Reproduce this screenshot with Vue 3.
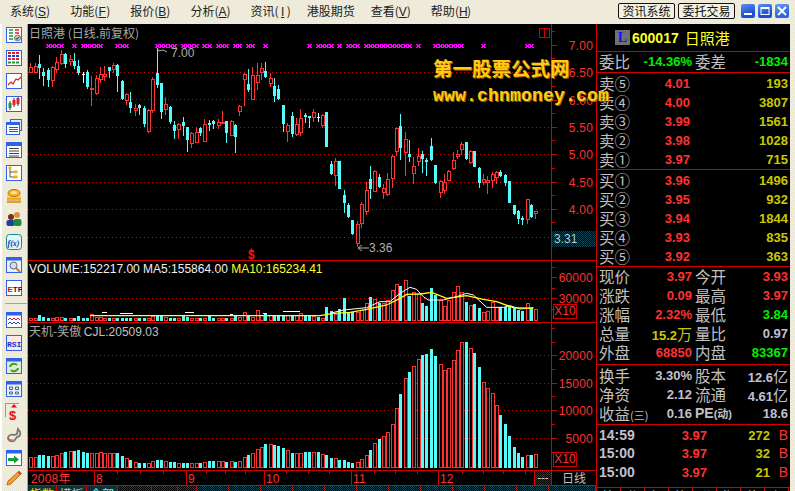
<script setup>
// y values are in 3x page units, second block starts at y = 30
const firstCandles = [
  ['r',202,215,190,220],['r',198,215,190,220],['c',193,203,165,237],['c',216,227,205,257],['c',210,240,205,260],
  ['r',200,240,197,260],['r',185,208,172,220],['r',162,190,150,195],['c',162,193,158,205],['r',178,183,165,198],
  ['c',183,197,160,207],['c',198,218,180,225],['w',222,222,215,250],['c',215,260,210,268],['r',265,265,228,317],
  ['r',235,280,225,285],['r',222,237,200,250],['r',222,228,198,242],['c',202,212,200,235],['r',195,207,188,220],
  ['c',195,227,192,275],['c',243,298,240,300],['r',282,300,278,316],['c',305,323,275,340],['r',325,330,312,347],
  ['c',315,323,312,345],['c',323,372,318,380],['r',330,393,328,398],['r',237,330,232,338],['c',220,255,143,265],
  ['c',250,335,248,357],['r',312,328,292,345],['c',322,367,318,372],['c',375,392,362,417],['r',373,387,370,417],
  ['c',365,378,350,407],['c',381,420,380,455],['r',400,430,395,445],['r',397,425,380,427],['c',384,398,380,408],
  ['r',373,423,358,427],['c',368,375,360,392],['c',363,372,360,387],['r',366,374,358,388],['r',365,369,333,369],
  ['c',363,398,362,428],['r',363,404,360,405],['c',375,410,373,458],['r',318,332,315,348],['r',223,236,220,318],
  ['c',252,270,208,275],['r',226,298,200,300],['r',225,245,190,270],['r',205,215,190,240],['c',213,232,187,235],
  ['r',235,250,220,262],['c',258,288,235,305],['c',267,298,255,300],['c',316,372,315,395],['r',375,392,368,425],
  ['c',348,402,337,412],['r',372,402,355,408],
]
const secondCandles = [
  ['r',265,305,238,317],['c',255,262,250,280],['c',259,264,258,293],['r',246,262,238,275],['w',262,262,248,275],
  ['r',255,285,252,293],['c',246,350,245,350],['c',403,432,393,435],['r',393,434,385,467],['c',393,476,393,477],
  ['c',495,518,480,548],['c',524,561,520,563],['c',570,612,570,614],['r',582,638,572,650],['r',523,580,515,593],
  ['r',480,542,455,555],['c',447,477,408,507],['r',423,482,420,485],['c',440,470,432,474],['r',475,485,462,507],
  ['r',447,492,430,497],['r',378,445,375,473],['r',295,362,292,377],['c',288,353,252,390],['r',327,365,307,437],
  ['c',372,381,330,396],['r',408,430,380,462],['r',378,393,353,407],['c',372,388,362,430],['c',390,395,383,438],
  ['c',348,390,323,392],['c',405,458,405,462],['r',453,485,450,503],['r',457,480,432,492],['r',423,450,420,453],
  ['r',390,413,367,420],['r',373,377,360,388],['r',342,358,337,375],['c',336,388,336,390],['r',362,397,360,402],
  ['c',363,410,363,412],['c',413,458,410,474],['r',447,455,433,464],['r',450,457,437,492],['r',432,449,425,473],
  ['r',427,442,422,462],['c',426,438,420,440],['c',435,458,432,468],['c',453,518,453,520],['c',525,552,525,555],
  ['c',543,567,540,582],['c',563,570,558,585],['r',508,568,507,582],['c',525,560,522,563],['r',544,550,544,567],
]

function barX(i) {
  return Math.round(30.33 + 4.353 * i)
}

const candles = [...firstCandles, ...secondCandles.map(c => [c[0], c[1] + 90, c[2] + 90, c[3] + 90, c[4] + 90])].map((c, i) => ({
  kind: c[0],
  x: barX(i),
  top: Math.round(c[1] / 3),
  bottom: Math.round(c[2] / 3),
  high: Math.round(c[3] / 3),
  low: Math.round(c[4] / 3),
}))

const markerIndexes = [4,5,6,7,10,12,13,14,15,16,20,21,22,29,30,31,32,33,35,36,37,38,40,41,43,44,45,47,48,50,51,54,
  64,66,67,68,69,71,73,74,75,77,78,79,80,81,82,83,84,85,86,87,89,93,94,95,96,97,98,99,104,114,115]

// bar heights in 3x units, negative = hollow red
const volumeRaw = [-5,-5,15,8,6,-5,-10,-10,6,-5,6,12,6,6,-18,-8,-10,-6,6,-6,6,5,5,5,-5,5,4,-3,-12,15,12,-8,6,6,-5,15,8,-7,-5,5,-5,12,5,-5,-5,5,-7,15,-10,-25,15,-10,-30,-15,20,-15,12,15,15,-15,15,-15,
  -20,13,13,-13,8,-6,40,27,-18,33,66,25,25,-25,-30,-50,68,-62,50,-50,-60,-90,-108,102,-120,72,-85,-80,50,42,96,75,-60,-42,-60,-84,-102,-84,54,-45,48,36,-24,-27,-55,-38,38,40,42,36,30,27,-50,37,-34]
const cjlRaw = [-30,-30,37,37,34,-34,-37,-43,46,-49,49,52,46,43,-43,-43,-46,-43,-43,-43,43,34,-27,21,-15,12,12,-12,-18,21,21,-18,15,15,-12,12,12,-12,-12,12,-15,18,18,-18,-18,15,-18,15,-18,-30,37,-43,-55,-61,70,-70,67,64,58,-52,43,-43,
  -42,44,44,-44,44,-40,36,28,-28,21,21,15,12,-15,-24,-36,52,-72,84,-93,-105,-129,-177,219,-267,285,-303,-324,336,339,354,333,-309,-291,-297,-321,-351,-375,375,-357,342,300,-255,-237,-222,-186,156,129,93,60,42,30,-36,36,-39]

function makeBars(list, base) {
  return list.map((v, i) => {
    const h = Math.max(2, Math.round(Math.abs(v) / 3))
    return { x: barX(i), y: base - h, h, hollow: v < 0 }
  })
}
const volumeBars = makeBars(volumeRaw, 320)
const cjlBars = makeBars(cjlRaw, 467)

function line(points) {
  return points.map(p => `${300 + p[0] / 3},${260 + p[1] / 3}`).join(' ')
}
const ma10 = line([[-630,167],[0,167],[60,167],[100,160],[150,157],[200,148],[260,135],[300,115],[320,103],[360,102],[395,97],[440,115],[500,107],[550,118],[590,125],[640,143],[700,145]])
const ma5 = line([[90,160],[130,150],[200,143],[240,125],[270,125],[300,100],[330,82],[350,88],[370,110],[385,120],[430,120],[470,110],[500,100],[520,105],[560,142],[610,142],[630,137],[660,147],[700,143]])
const ma5Left = ['-595,158 -580,158','-540,160 -500,160','-345,158 -318,158','-210,163 -200,163','-110,161 -100,161','-50,153 0,153'].map(s =>
  s.split(' ').map(p => p.split(',').map(Number)))
const ma5Pieces = ma5Left.map(line)

const mainGrid = [72, 99, 127, 154, 182, 209, 237]
const priceLabels = [['7.00',45],['6.50',72],['6.00',100],['5.50',127],['5.00',154],['4.50',182],['4.00',209]]
const priceMinor = [31,58,86,113,140,168,195,222]
const volumeLabels = [['60000',277],['30000',298]]
const volumeMinor = [267,288,309]
const cjlLabels = [['20000',355],['15000',383],['10000',410],['5000',438]]
const cjlMinor = [328,342,369,396,424,452]

const months = [['2008年',31,0],['8',96,94],['9',188,186],['10',266,264],['11',353,351],['12',440,438]]
const timeTicks = [117,140,163,206,225,245,286,308,329,374,395,417,462,483,503,525]

const sells = [['卖⑤','4.01','193'],['卖④','4.00','3807'],['卖③','3.99','1561'],['卖②','3.98','1028'],['卖①','3.97','715']]
const buys = [['买①','3.96','1496'],['买②','3.95','932'],['买③','3.94','1844'],['买④','3.93','835'],['买⑤','3.92','363']]
const ticks = [['14:59','3.97','272'],['15:00','3.97','32'],['15:00','3.97','21']]
const menus = [['系统','S'],['功能','F'],['报价','B'],['分析','A'],['资讯','I'],['港股期货',''],['查看','V'],['帮助','H']]

const chartTabs = [[29,'指数','yellow'],[30,'模板','grey'],[31,'全部','cyan'],[34],[26],[19],[32],[32],[32],[32],[32],[32],[32],[32],[32],[32],[32],[47]]
const sideTabs = ['笔','分','细','势','联','指','值','主']
</script>

<template>
  <div class="app">
    <header class="menubar">
      <nav class="menus">
        <span v-for="m in menus" :key="m[0]" class="menu" :class="{ wide: !m[1] }">{{ m[0] }}<template v-if="m[1]">(<u>{{ m[1] }}</u>)</template></span>
      </nav>
      <div class="actions">
        <button class="cmd">资讯系统</button>
        <button class="cmd last">委托交易</button>
        <span class="win">
          <svg width="14" height="14" viewBox="0 0 14 14"><rect x="3" y="9" width="8" height="2" fill="#fff" /></svg>
        </span>
        <span class="win">
          <svg width="14" height="14" viewBox="0 0 14 14"><rect x="3" y="3.5" width="8" height="7" fill="none" stroke="#fff" /><rect x="3" y="3" width="8" height="2" fill="#fff" /></svg>
        </span>
        <span class="win close">
          <svg width="14" height="14" viewBox="0 0 14 14"><path d="M3 3l8 8M11 3l-8 8" stroke="#fff" stroke-width="2" /></svg>
        </span>
      </div>
    </header>

    <div class="workspace">
      <aside class="toolbar">
        <svg class="tool" viewBox="0 0 16 16"><rect x=".5" y=".5" width="15" height="15" fill="#fff" stroke="#2f62e8" /><path d="M3 3h4M3 6h4M3 9h4M3 12h4" stroke="#1a9a30" stroke-width="1.4" /><path d="M9 3h4M9 6h4" stroke="#e02020" stroke-width="1.4" /><circle cx="11.5" cy="11" r="3" fill="#ccc" stroke="#777" /><path d="M10 11l1 1.5 2-3" stroke="#333" fill="none" /></svg>
        <svg class="tool" viewBox="0 0 16 16"><rect x=".5" y=".5" width="15" height="15" fill="#fff" stroke="#2f62e8" /><path d="M2 3h12" stroke="#e02020" stroke-width="2" stroke-dasharray="3 1" /><path d="M2 6h12" stroke="#1a3ad0" stroke-width="2" stroke-dasharray="3 1" /><path d="M2 9h12" stroke="#e02020" stroke-width="2" stroke-dasharray="3 1" /><path d="M2 12.5h12" stroke="#1a9a30" stroke-width="2" stroke-dasharray="3 1" /></svg>
        <svg class="tool" viewBox="0 0 16 16"><rect x=".5" y=".5" width="15" height="15" fill="#fff" stroke="#2f62e8" /><path d="M2 12l3-3 2 2 3-5 2 1 3-3" fill="none" stroke="#e02020" stroke-width="1.2" /></svg>
        <svg class="tool" viewBox="0 0 16 16"><rect x=".5" y=".5" width="15" height="15" fill="#fff" stroke="#2f62e8" /><path d="M4 5v9M8 2v9M12 1v9" stroke="#333" /><rect x="2.5" y="7" width="3" height="5" fill="#1a9a30" /><rect x="6.5" y="4" width="3" height="5" fill="#e02020" /><rect x="10.5" y="2" width="3" height="6" fill="#e02020" /></svg>
        <svg class="tool" viewBox="0 0 16 16"><rect x="4.5" y=".5" width="11" height="11" fill="#dfe8fb" stroke="#2f62e8" /><rect x=".5" y="3.5" width="13" height="12" fill="#fff" stroke="#2f62e8" /><rect x="1" y="4" width="12" height="2" fill="#2f62e8" /><path d="M3 8.5h9M3 10.5h9M3 12.5h9" stroke="#555" /></svg>
        <svg class="tool" viewBox="0 0 16 16"><rect x=".5" y=".5" width="15" height="15" fill="#fff" stroke="#2f62e8" /><rect x="1" y="1" width="14" height="3" fill="#2f62e8" /><path d="M3 6.5h10M3 9h10M3 11.5h10M3 14h10" stroke="#444" /></svg>
        <svg class="tool" viewBox="0 0 16 16"><rect x=".5" y=".5" width="15" height="15" fill="#fff" stroke="#2f62e8" /><path d="M4 3v9h4M4 7h4" fill="none" stroke="#555" /><rect x="2.5" y="1.5" width="3" height="3" fill="#f0b020" /><rect x="7.5" y="5.5" width="4" height="3" fill="#f0b020" /><rect x="7.5" y="10.5" width="4" height="3" fill="#f0b020" /></svg>
        <svg class="tool" viewBox="0 0 16 16"><rect x="1" y="10" width="14" height="5" fill="#e8a020" /><rect x="1" y="7" width="14" height="3" fill="#f8d040" /><ellipse cx="8" cy="5" rx="6" ry="3.5" fill="#f4b830" stroke="#c07010" /><ellipse cx="8" cy="4.5" rx="3" ry="1.5" fill="#fbe880" /><path d="M1 12h14" stroke="#b4d0f0" /></svg>
        <svg class="tool" viewBox="0 0 16 16"><circle cx="5" cy="6" r="3" fill="#7a3010" /><rect x="0.5" y="9" width="8" height="6" rx="2" fill="#1f3f9a" /><circle cx="11" cy="4" r="3" fill="#d89040" /><rect x="7.5" y="8" width="8" height="7" rx="2" fill="#1f8a3a" /></svg>
        <svg class="tool" viewBox="0 0 16 16"><rect x=".5" y=".5" width="15" height="15" rx="3" fill="#e4f6f4" stroke="#108a8a" /><text x="1.5" y="12" class="fx">f(x)</text></svg>
        <svg class="tool" viewBox="0 0 16 16"><rect x=".5" y=".5" width="15" height="15" fill="#eaf0fc" stroke="#2f62e8" /><rect x="1" y="1" width="14" height="2.5" fill="#2f62e8" /><circle cx="7.5" cy="8.5" r="3.5" fill="#cfe0f4" stroke="#667" /><path d="M10 11l4 4" stroke="#c08030" stroke-width="2" /></svg>
        <svg class="tool" viewBox="0 0 16 16"><rect x=".5" y=".5" width="15" height="15" fill="#fff" stroke="#2f62e8" /><text x="1.5" y="11.5" class="etf"><tspan fill="#d01010">E</tspan><tspan fill="#222">TF</tspan></text></svg>
        <div class="toolsep"></div>
        <svg class="tool" viewBox="0 0 16 16"><rect x=".5" y=".5" width="15" height="15" fill="#fff" stroke="#2f62e8" /><rect x="1" y="1" width="14" height="2.5" fill="#2f62e8" /><path d="M2 8l2-2 2 2 2-2 2 2 2-2 2 2" fill="none" stroke="#e02020" /><path d="M2 12l2-2 2 2 2-2 2 2 2-2 2 2" fill="none" stroke="#1a3ad0" /></svg>
        <svg class="tool" viewBox="0 0 16 16"><rect x=".5" y=".5" width="15" height="15" fill="#fbe9e4" stroke="#2f62e8" /><text x="1" y="11.5" class="rsi">RSI</text></svg>
        <svg class="tool" viewBox="0 0 16 16"><rect x=".5" y=".5" width="15" height="15" fill="#e4ecd8" stroke="#2f62e8" /><rect x="1" y="1" width="14" height="2.5" fill="#2f62e8" /><path d="M4 9a4 3.5 0 0 1 7-2M12 10a4 3.5 0 0 1-7 2" fill="none" stroke="#3aa030" stroke-width="2" /></svg>
        <svg class="tool" viewBox="0 0 16 16"><rect x=".5" y=".5" width="15" height="15" fill="#e8f0fc" stroke="#2f62e8" /><rect x="1" y="1" width="14" height="2.5" fill="#2f62e8" /><path d="M3.5 6h3v2.500h-3zM9.500 6h3v2.500h-3zM3.500 11h3v2h-3zM9.500 11h3v2h-3z" fill="none" stroke="#506080" /></svg>
        <div class="tool pressed">
          <svg width="16" height="16" viewBox="0 0 16 16"><path d="M8 0l3 3.500H5z" fill="#e01010" /><text x="3" y="15.500" class="dollar">$</text></svg>
        </div>
        <svg class="tool" viewBox="0 0 16 16"><path d="M2 11c0-3 4-4 6-3l3-1 1-5 2 3c1 3-1 5-3 5l-3 4c-3 1-6 0-6-3z" fill="none" stroke="#777" stroke-width="1.800" /><path d="M2 11c1 2 3 2 5 2" stroke="#d04020" fill="none" /></svg>
        <svg class="tool" viewBox="0 0 16 16"><rect x=".5" y=".5" width="15" height="15" fill="#fff" stroke="#2f62e8" /><rect x="1" y="1" width="14" height="2.500" fill="#2f62e8" /><path d="M2 8h6V5.500l5 4-5 4V11H2z" fill="#10a030" /></svg>
        <svg class="tool pencil" viewBox="0 0 16 16"><path d="M13 1l2.500 2.500L5 14 1 15l1-4z" fill="#f0a030" stroke="#a05010" stroke-width=".7" /><path d="M13 1l2.500 2.500-1.500 1.500L11.500 2.500z" fill="#e04040" /></svg>
      </aside>

      <main class="charts">
        <section class="pane main-pane">
          <div class="plot">
            <svg width="523" height="236" viewBox="28 24 523 236" shape-rendering="crispEdges">
              <line v-for="y in mainGrid" :key="y" x1="28" x2="551" :y1="y + 0.5" :y2="y + 0.5" class="dots" />
              <path v-for="i in markerIndexes" :key="i" :d="`M${barX(i) - 1.5} 44l4 4m0-4l-4 4`" class="marker" />
              <g v-for="(c, i) in candles" :key="i" :class="c.kind">
                <line class="wick" :x1="c.x + 0.5" :x2="c.x + 0.5" :y1="c.high" :y2="c.top" />
                <line class="wick" :x1="c.x + 0.5" :x2="c.x + 0.5" :y1="c.bottom" :y2="c.low" />
                <rect v-if="c.kind === 'c'" :x="c.x - 1" :y="c.top" width="3" :height="c.bottom - c.top" class="solid" />
                <template v-else-if="c.kind === 'r'">
                  <rect :x="c.x - 1" :y="c.top" width="4" :height="Math.max(2, c.bottom - c.top + 1)" class="red-bar" />
                  <rect :x="c.x" :y="c.top + 1" width="2" :height="Math.max(0, c.bottom - c.top - 1)" class="inner" />
                </template>
                <line v-else class="wick" :x1="c.x - 1" :x2="c.x + 2" :y1="c.top + 0.5" :y2="c.top + 0.5" />
              </g>
              <path d="M157 48l2 3 4-1 4 2" class="note-line" shape-rendering="auto" />
              <text x="171" y="57" class="note">7.00</text>
              <path d="M358 248h11M358 248l4-3M358 248l4 3" class="note-line" shape-rendering="auto" />
              <text x="369" y="252" class="note">3.36</text>
              <path d="M249 252l2.500-4 2.500 4z" fill="#ff1010" shape-rendering="auto" />
              <text x="248" y="259" class="flag">$</text>
              <rect x="539.500" y="28.500" width="10" height="9" class="outline" />
              <line x1="544.500" x2="544.500" y1="28" y2="38" class="outline" />
            </svg>
            <div class="title stock-title">日照港 (日线.前复权)</div>
          </div>
          <svg class="axis" width="44" height="236" viewBox="552 24 44 236" shape-rendering="crispEdges">
            <g v-for="l in priceLabels" :key="l[0]">
              <line x1="552" x2="557" :y1="l[1] + 0.5" :y2="l[1] + 0.5" class="tick" />
              <text x="593" :y="l[1] + 5" text-anchor="end" class="axis-text">{{ l[0] }}</text>
            </g>
            <line v-for="y in priceMinor" :key="y" x1="552" x2="555" :y1="y + 0.5" :y2="y + 0.5" class="tick" />
          </svg>
          <div class="last-price">3.31</div>
        </section>

        <section class="pane volume-pane">
          <div class="plot">
            <svg width="523" height="61" viewBox="28 261 523 61" shape-rendering="crispEdges">
              <line x1="28" x2="551" y1="298.500" y2="298.500" class="dots" />
              <template v-for="(b, i) in volumeBars" :key="i">
                <template v-if="b.hollow">
                  <rect :x="b.x - 1" :y="b.y" width="4" :height="b.h + 1" class="red-bar" />
                  <rect :x="b.x" :y="b.y + 1" width="2" :height="b.h - 1" class="inner" />
                </template>
                <rect v-else :x="b.x - 1" :y="b.y" width="3" :height="b.h + 1" class="solid" />
              </template>
              <polyline v-for="p in ma5Pieces" :key="p" :points="p" class="ma-white" />
              <polyline :points="ma5" class="ma-white" shape-rendering="auto" />
              <polyline :points="ma10" class="ma-yellow" shape-rendering="auto" />
            </svg>
            <div class="title vol-title">VOLUME:152217.00 MA5:155864.00 <span class="ma10">MA10:165234.41</span></div>
          </div>
          <svg class="axis" width="44" height="61" viewBox="552 261 44 61" shape-rendering="crispEdges">
            <g v-for="l in volumeLabels" :key="l[0]">
              <line x1="552" x2="557" :y1="l[1] + 0.5" :y2="l[1] + 0.5" class="tick" />
              <text x="593" :y="l[1] + 5" text-anchor="end" class="axis-text">{{ l[0] }}</text>
            </g>
            <line v-for="y in volumeMinor" :key="y" x1="552" x2="555" :y1="y + 0.5" :y2="y + 0.5" class="tick" />
          </svg>
          <div class="zoom-box">X10</div>
        </section>

        <section class="pane cjl-pane">
          <div class="plot">
            <svg width="523" height="147" viewBox="28 323 523 147" shape-rendering="crispEdges">
              <line v-for="l in cjlLabels" :key="l[0]" x1="28" x2="551" :y1="l[1] + 0.5" :y2="l[1] + 0.5" class="dots" />
              <template v-for="(b, i) in cjlBars" :key="i">
                <template v-if="b.hollow">
                  <rect :x="b.x - 1" :y="b.y" width="4" :height="b.h + 1" class="red-bar" />
                  <rect :x="b.x" :y="b.y + 1" width="2" :height="b.h - 1" class="inner" />
                </template>
                <rect v-else :x="b.x - 1" :y="b.y" width="3" :height="b.h + 1" class="solid" />
              </template>
            </svg>
            <div class="title cjl-title">天机-笑傲 <span class="latin">CJL:20509.03</span></div>
          </div>
          <svg class="axis" width="44" height="147" viewBox="552 323 44 147" shape-rendering="crispEdges">
            <g v-for="l in cjlLabels" :key="l[0]">
              <line x1="552" x2="557" :y1="l[1] + 0.5" :y2="l[1] + 0.5" class="tick" />
              <text x="593" :y="l[1] + 5" text-anchor="end" class="axis-text">{{ l[0] }}</text>
            </g>
            <line v-for="y in cjlMinor" :key="y" x1="552" x2="555" :y1="y + 0.5" :y2="y + 0.5" class="tick" />
          </svg>
          <div class="zoom-box">X10</div>
        </section>

        <section class="timebar">
          <svg width="506" height="14" viewBox="28 471 506 14" shape-rendering="crispEdges">
            <line v-for="t in timeTicks" :key="t" :x1="t + 0.5" :x2="t + 0.5" y1="471" y2="474" class="tick" />
            <g v-for="m in months" :key="m[0]">
              <line v-if="m[2]" :x1="m[2] + 0.5" :x2="m[2] + 0.5" y1="471" y2="485" class="tick" />
              <text :x="m[1]" y="483" class="axis-text">{{ m[0] }}</text>
            </g>
          </svg>
          <div class="dash-cell">---</div>
          <div class="period">日线</div>
        </section>

        <footer class="chart-tabs">
          <span v-for="(t, i) in chartTabs" :key="i" class="tab" :class="t[2] || 'dither'" :style="{ width: t[0] + 'px' }">{{ t[1] }}</span>
        </footer>
      </main>

      <aside class="panel">
        <div class="stock-head">
          <span class="logo">L</span>
          <span class="code">600017</span>
          <span class="name">日照港</span>
        </div>
        <div class="row-grid ratio">
          <span class="cn">委比</span><b class="green">-14.36%</b><span class="cn pad">委差</span><b class="green">-1834</b>
        </div>
        <div class="book">
          <div v-for="r in sells" :key="r[0]" class="book-row">
            <span class="cn">{{ r[0] }}</span><b class="red">{{ r[1] }}</b><b class="olive">{{ r[2] }}</b>
          </div>
        </div>
        <div class="book">
          <div v-for="r in buys" :key="r[0]" class="book-row">
            <span class="cn">{{ r[0] }}</span><b class="red">{{ r[1] }}</b><b class="olive">{{ r[2] }}</b>
          </div>
        </div>
        <div class="stats quote">
          <div class="row-grid"><span class="cn">现价</span><b class="red">3.97</b><span class="cn pad">今开</span><b class="red">3.93</b></div>
          <div class="row-grid"><span class="cn">涨跌</span><b class="red">0.09</b><span class="cn pad">最高</span><b class="red">3.97</b></div>
          <div class="row-grid"><span class="cn">涨幅</span><b class="red">2.32%</b><span class="cn pad">最低</span><b class="green">3.84</b></div>
          <div class="row-grid"><span class="cn">总量</span><b class="olive">15.2<i>万</i></b><span class="cn pad">量比</span><b class="pale">0.97</b></div>
          <div class="row-grid"><span class="cn">外盘</span><b class="red">68850</b><span class="cn pad">内盘</span><b class="green">83367</b></div>
        </div>
        <div class="stats finance">
          <div class="row-grid"><span class="cn">换手</span><b class="pale">3.30%</b><span class="cn pad">股本</span><b class="pale">12.6<i>亿</i></b></div>
          <div class="row-grid"><span class="cn">净资</span><b class="pale">2.12</b><span class="cn pad">流通</span><b class="pale">4.61<i>亿</i></b></div>
          <div class="row-grid"><span class="cn">收益<small>(三)</small></span><b class="pale">0.16</b><span class="cn pad pe">PE<small>(动)</small></span><b class="pale">18.6</b></div>
        </div>
        <div class="ticks">
          <div v-for="(t, i) in ticks" :key="i" class="tick-row">
            <b class="pale">{{ t[0] }}</b><b class="red">{{ t[1] }}</b><b class="olive">{{ t[2] }}</b><b class="red">B</b>
          </div>
        </div>
        <footer class="side-tabs">
          <span v-for="(s, i) in sideTabs" :key="s" class="side-tab" :class="{ first: i === 0 }">{{ s }}</span>
        </footer>
      </aside>
    </div>

    <div class="watermark">
      <div class="wm-cn">第一股票公式网</div>
      <div class="wm-url">www.chnmoney.com</div>
    </div>
  </div>
</template>

<style>
html, body {
  margin: 0;
  background: #000;
}
</style>

<style scoped>
.app {
  position: relative;
  width: 795px;
  height: 491px;
  overflow: hidden;
  display: flex;
  flex-direction: column;
  font-family: "Liberation Sans", "Noto Sans CJK SC", sans-serif;
  background: repeating-conic-gradient(#f3f0e2 0 25%, #e9e6d5 0 50%) 0 0 / 2px 2px;
}

.menubar {
  height: 24px;
  flex: none;
  display: flex;
  justify-content: space-between;
  padding: 0 6px 0 10px;
  box-sizing: border-box;
}
.menus {
  display: flex;
  gap: 20px;
  align-items: center;
  padding-bottom: 2px;
}
.menu {
  font: 12px/16px "Noto Sans CJK SC", sans-serif;
  color: #222;
  white-space: pre;
}
.menu.wide {
  margin: 0 -4px;
}
.menu u {
  display: inline-block;
  width: 8px;
  text-align: center;
  font-family: "Liberation Sans", sans-serif;
}
.actions {
  display: flex;
  align-items: center;
  padding-bottom: 2px;
  gap: 3px;
}
.cmd {
  width: 57px;
  height: 16px;
  padding: 0;
  border: 1px solid #111;
  border-radius: 2px;
  background: #f4f1e4;
  color: #111;
  font: 12px/14px "Noto Sans CJK SC", sans-serif;
}
.cmd.last {
  margin-right: 3px;
}
.win {
  width: 14px;
  height: 14px;
  border-radius: 2px;
  background: linear-gradient(160deg, #5c8cf0, #1a4fd8 70%);
  display: block;
}
.win svg {
  display: block;
}
.win.close {
  background: linear-gradient(160deg, #6aa0f4, #2a66e0 70%);
}

.workspace {
  flex: 1;
  display: flex;
  min-height: 0;
}

.toolbar {
  width: 28px;
  flex: none;
  box-sizing: border-box;
  padding: 3px 0 0 4px;
  display: flex;
  flex-direction: column;
  gap: 7px;
  border-left: 2px solid #fff;
  border-right: 1px solid #aaa89a;
}
.tool {
  width: 16px;
  height: 16px;
  display: block;
  flex: none;
}
.tool.pressed {
  box-shadow: -2px -2px 0 -1px #9a9888;
}
.tool.pencil {
  margin-top: -3px;
}
.toolsep {
  height: 1px;
  margin: 0 -1px 1px;
  background: #a8a698;
  flex: none;
}
.fx {
  font: italic bold 8px "Liberation Serif", serif;
  fill: #1a30c0;
}
.etf {
  font: bold 8px "Liberation Sans", sans-serif;
}
.rsi {
  font: bold 8px "Liberation Mono", monospace;
  fill: #1a30d0;
}
.dollar {
  font: bold 13px "Liberation Sans", sans-serif;
  fill: #e01010;
}

.charts {
  width: 568px;
  flex: none;
  display: flex;
  flex-direction: column;
  background: #000;
}
.pane {
  position: relative;
  display: flex;
  flex: none;
  border-bottom: 1px solid #d40000;
}
.main-pane {
  height: 236px;
}
.volume-pane {
  height: 61px;
}
.cjl-pane {
  height: 147px;
}
.plot {
  position: relative;
  width: 523px;
  flex: none;
  border-right: 1px solid #d40000;
}
.plot svg,
.axis {
  display: block;
}
.title {
  position: absolute;
  left: 1px;
  font-size: 12px;
  line-height: 14px;
  white-space: pre;
}
.stock-title {
  top: 2px;
  color: #a8a8a8;
  font-family: "Noto Sans CJK SC", sans-serif;
}
.vol-title {
  top: 1px;
  color: #f0f0f0;
}
.ma10 {
  color: #ffff30;
}
.cjl-title {
  top: 1px;
  color: #a8a8a8;
  font-family: "Noto Sans CJK SC", sans-serif;
}
.latin {
  font-family: "Liberation Sans", sans-serif;
  color: #c0c0c0;
}

.dots {
  stroke: #c00808;
  stroke-dasharray: 1 3;
}
.marker {
  stroke: #ff00ff;
  stroke-width: 1.500;
  fill: none;
}
.wick {
  stroke: #ff3232;
}
.c .wick {
  stroke: #54fcfc;
}
.w .wick {
  stroke: #fff;
}
.solid {
  fill: #54fcfc;
}
.red-bar {
  fill: #ff3232;
}
.inner {
  fill: #000;
}
.note-line {
  fill: none;
  stroke: #b0b0b0;
}
.note {
  font-size: 12px;
  fill: #b0b0b0;
}
.flag {
  font-size: 12px;
  font-weight: bold;
  fill: #ff1010;
}
.outline {
  fill: none;
  stroke: #d40000;
}
.ma-white {
  fill: none;
  stroke: #fff;
}
.ma-yellow {
  fill: none;
  stroke: #ffff20;
  stroke-width: 1.300;
}
.tick {
  stroke: #d40000;
}
.axis-text {
  font-size: 12px;
  letter-spacing: .2px;
  fill: #ff3232;
}

.last-price {
  position: absolute;
  left: 524px;
  top: 207px;
  width: 44px;
  height: 16px;
  box-sizing: border-box;
  padding-left: 2px;
  color: #c0c8c8;
  font-size: 12px;
  line-height: 16px;
  background: repeating-conic-gradient(#0a4450 0 25%, #000 0 50%) 0 0 / 2px 2px;
}
.zoom-box {
  position: absolute;
  left: 525px;
  bottom: 3px;
  width: 24px;
  height: 15px;
  box-sizing: border-box;
  border: 1px solid #d40000;
  color: #ff3232;
  font-size: 12px;
  line-height: 13px;
  text-align: center;
}

.timebar {
  height: 15px;
  flex: none;
  display: flex;
  box-sizing: border-box;
  border-bottom: 1px solid #d40000;
}
.timebar svg {
  display: block;
  flex: none;
}
.dash-cell {
  width: 18px;
  flex: none;
  box-sizing: border-box;
  border-left: 1px solid #d40000;
  border-right: 1px solid #d40000;
  color: #e0e0e0;
  font-size: 11px;
  line-height: 12px;
  text-align: center;
  background: repeating-conic-gradient(#0a4450 0 25%, #000 0 50%) 0 0 / 2px 2px;
}
.period {
  flex: 1;
  color: #c0c0c0;
  font: 12px/14px "Noto Sans CJK SC", sans-serif;
  text-align: center;
}

.chart-tabs {
  flex: 1;
  display: flex;
  overflow: hidden;
  min-height: 0;
}
.tab {
  flex: none;
  box-sizing: border-box;
  height: 5px;
  overflow: hidden;
  border-right: 1px solid #d40000;
  font: 12px/16px "Noto Sans CJK SC", sans-serif;
  text-align: center;
}
.tab.dither {
  background: repeating-conic-gradient(#0a4450 0 25%, #000 0 50%) 0 0 / 2px 2px;
}
.tab.yellow {
  color: #e0e000;
  background: #103038;
}
.tab.grey {
  color: #c0c0c0;
  background: #103038;
}
.tab.cyan {
  color: #54fcfc;
  background: #103038;
}

.panel {
  width: 194px;
  flex: none;
  box-sizing: border-box;
  border-left: 1px solid #d40000;
  display: flex;
  flex-direction: column;
  background: #000;
  color: #c0c0c0;
}
.panel b {
  font-size: 13px;
  line-height: 19px;
  text-align: right;
  font-weight: bold;
  white-space: nowrap;
}
.panel b i {
  font: normal 15px/19px "Noto Sans CJK SC", sans-serif;
}
.cn {
  font: 15.500px/19px "Noto Sans CJK SC", sans-serif;
  color: #c0c0c0;
  white-space: nowrap;
}
.cn small {
  font-size: 11px;
}
.pe {
  font-family: "Liberation Sans", "Noto Sans CJK SC", sans-serif;
  font-size: 14px;
  font-weight: bold;
}
.red {
  color: #ff3232;
}
.green {
  color: #00f000;
}
.olive {
  color: #c8c800;
}
.pale {
  color: #c0c0d0;
}
.stock-head {
  height: 28px;
  flex: none;
  box-sizing: border-box;
  padding-left: 18px;
  display: flex;
  align-items: center;
  border-bottom: 1px solid #d40000;
}
.logo {
  width: 15px;
  height: 15px;
  margin-right: 2px;
  background: #707070;
  color: #1010ff;
  font: bold 14px/15px "Liberation Serif", serif;
  text-align: center;
}
.code {
  color: #ffff20;
  font-size: 14px;
  font-weight: bold;
}
.name {
  margin-left: 6px;
  color: #ffff20;
  font: 15px/18px "Noto Sans CJK SC", sans-serif;
}
.row-grid {
  display: grid;
  grid-template-columns: 33px 60px 36px 60px;
  height: 19px;
  padding-left: 2px;
}
.ratio {
  height: 20px;
  flex: none;
  border-bottom: 1px solid #d40000;
}
.pad {
  padding-left: 3px;
}
.book {
  height: 97px;
  flex: none;
  box-sizing: border-box;
  padding-top: 1px;
  border-bottom: 1px solid #d40000;
}
.book-row {
  display: grid;
  grid-template-columns: 42px 49px 98px;
  height: 19px;
  padding-left: 2px;
}
.quote {
  height: 97px;
  flex: none;
  border-bottom: 1px solid #d40000;
}
.finance {
  height: 60px;
  flex: none;
  box-sizing: border-box;
  padding-top: 1px;
  border-bottom: 1px solid #d40000;
}
.ticks {
  height: 63px;
  flex: none;
  box-sizing: border-box;
  padding-top: 1px;
  border-bottom: 1px solid #d40000;
}
.tick-row {
  display: grid;
  grid-template-columns: 40px 68px 63px 18px;
  height: 18.300px;
  padding-left: 2px;
}
.panel .tick-row b:first-child {
  text-align: left;
  font-size: 14px;
}
.panel .tick-row b:last-child {
  font-weight: normal;
  font-size: 14px;
}
.side-tabs {
  flex: 1;
  display: flex;
  overflow: hidden;
  min-height: 0;
}
.side-tab {
  width: 24px;
  height: 5px;
  flex: none;
  overflow: hidden;
  box-sizing: border-box;
  border-right: 1px solid #d40000;
  color: #c0c0c0;
  font: 13px/15px "Noto Sans CJK SC", sans-serif;
  text-align: center;
}
.side-tab.first {
  color: #54fcfc;
}

.watermark {
  position: absolute;
  left: 433px;
  top: 56px;
  pointer-events: none;
}
.wm-cn {
  color: #ffcc10;
  font: bold 19.500px/24px "Noto Sans CJK SC", sans-serif;
  text-shadow: 1px 1px 0 #a86000;
  white-space: nowrap;
}
.wm-url {
  margin-top: 6px;
  color: #ffcc10;
  font: bold 18px/20px "Liberation Mono", monospace;
  letter-spacing: .2px;
  text-shadow: 1px 1px 0 #a86000;
  white-space: nowrap;
}
</style>
